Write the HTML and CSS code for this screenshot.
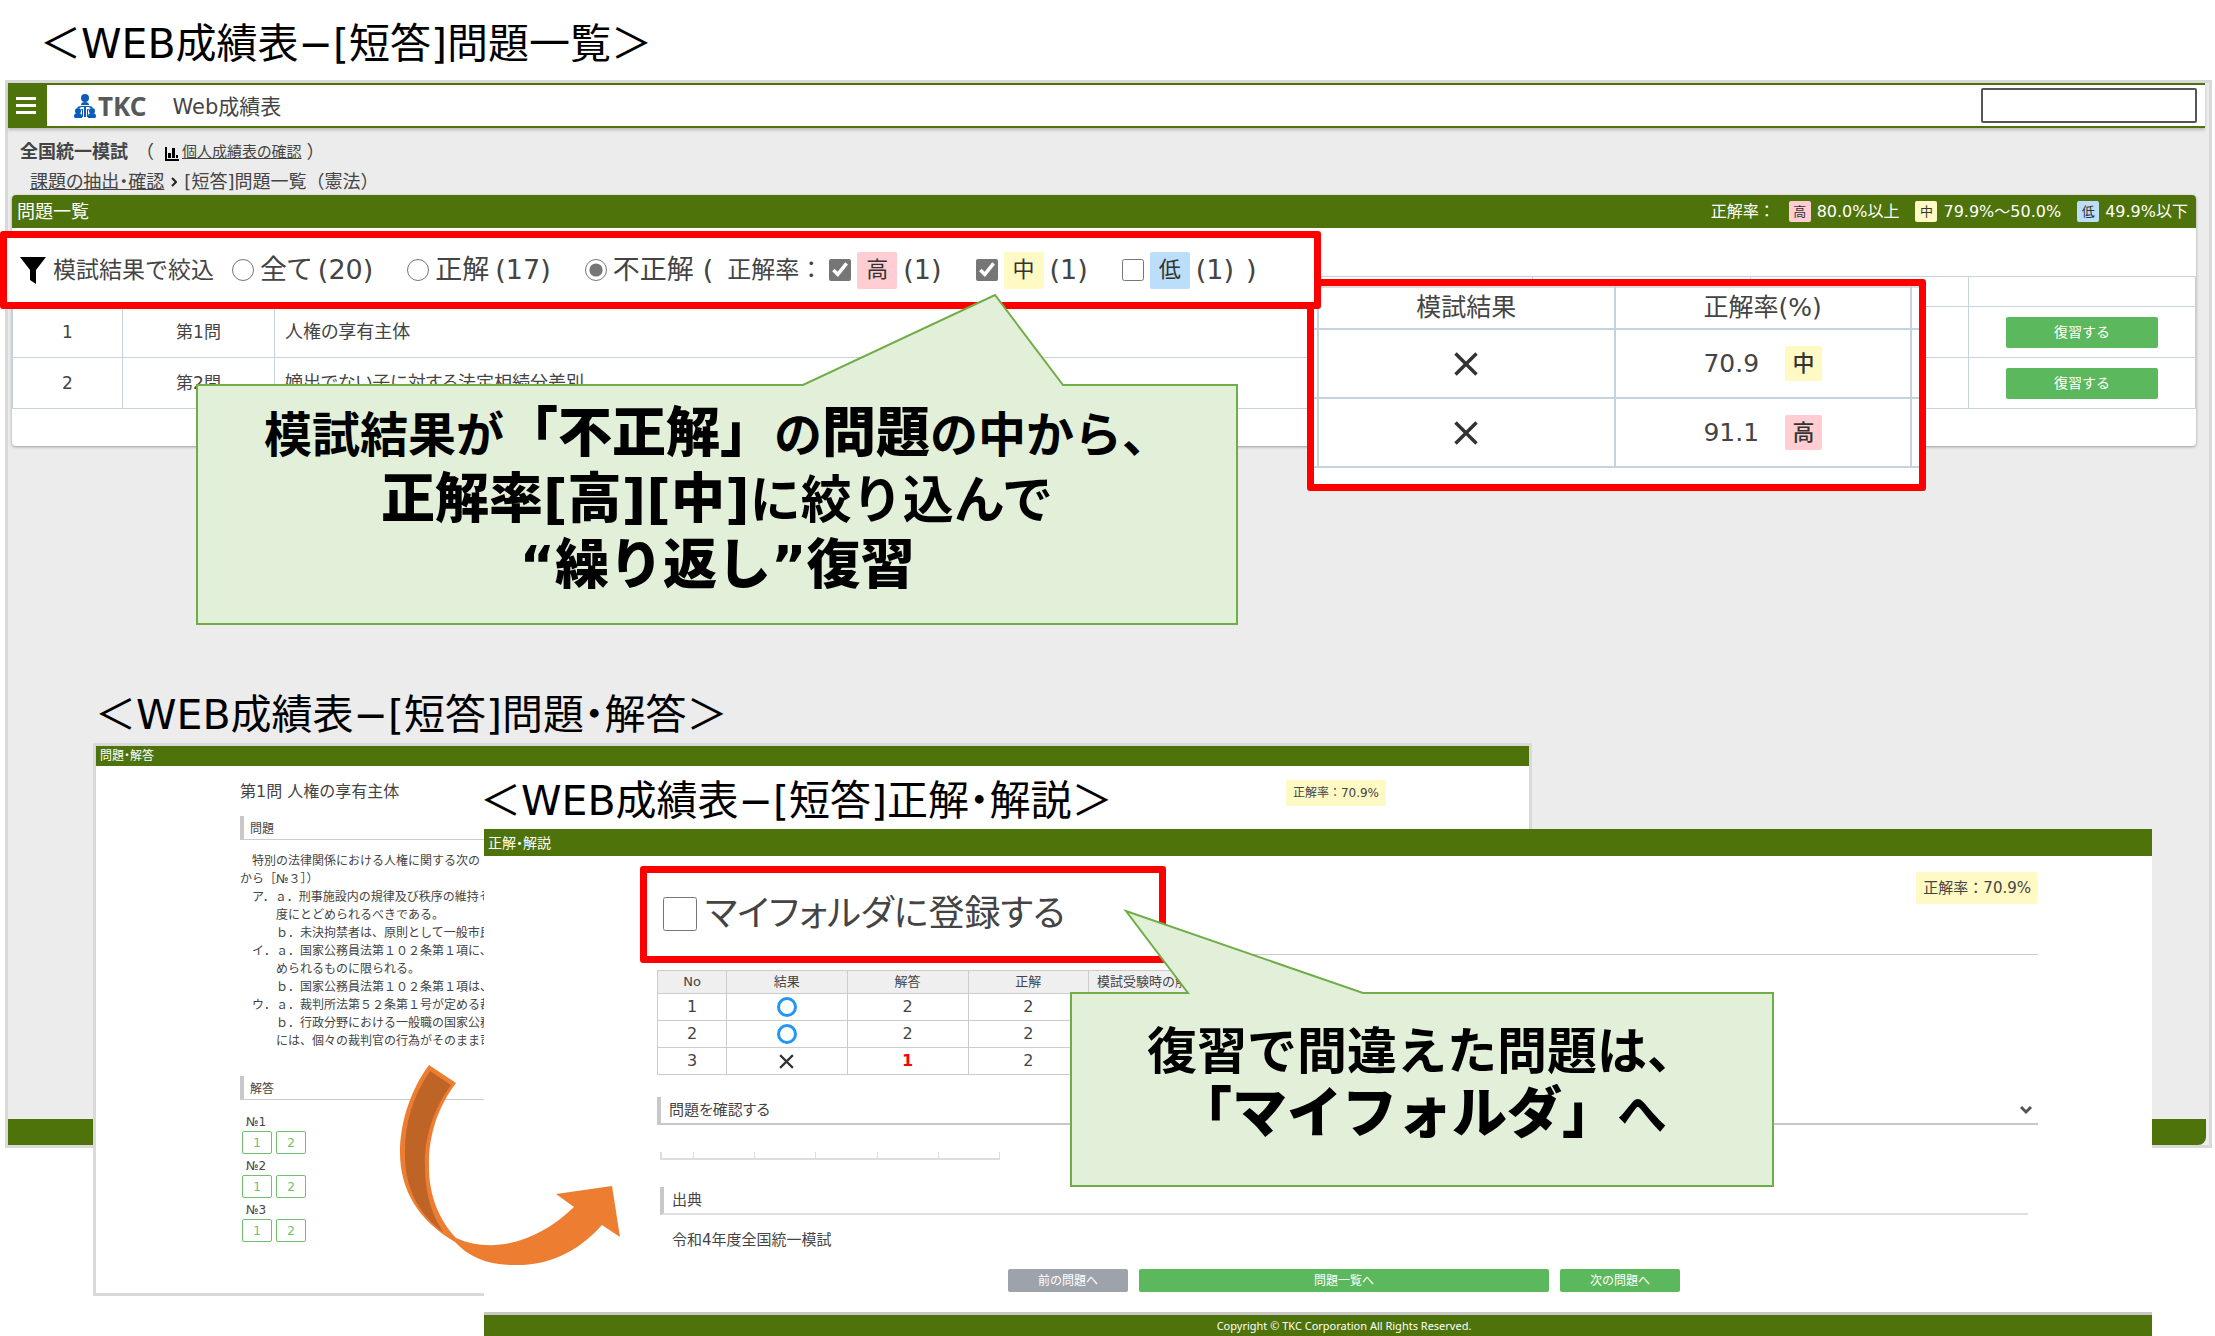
FILE: index.html
```html
<!DOCTYPE html>
<html lang="ja">
<head>
<meta charset="utf-8">
<meta name="viewport" content="width=device-width, initial-scale=1">
<title>WEB成績表</title>
<link rel="stylesheet" href="styles.css">
</head>
<body>
<main class="slide">
  <h1 class="caption caption-list">＜WEB成績表−[短答]問題一覧＞</h1>

  <section class="window window-list">
    <header class="topbar">
      <button class="menu" type="button" aria-label="メニュー"><span></span><span></span><span></span></button>
      <div class="logo">
        <svg width="22" height="24" viewBox="0 0 22 24" aria-hidden="true">
          <g fill="#0b5cb8">
            <circle cx="11" cy="4" r="4"/>
            <path d="M7 11Q7 8 11 8Q15 8 15 11Z"/>
            <path d="M3 14Q4 12 7 12H15Q18 12 19 14H16L15 13H12V23H10V13H7L6 14Z"/>
            <path d="M7 15H9V23H8V17Z M13 15H15L14 17V23H13Z"/>
            <circle cx="4" cy="17" r="3"/><circle cx="18" cy="17" r="3"/>
            <path d="M0 22Q0 19 4 19Q8 19 8 22V24H1Q0 24 0 22ZM14 22Q14 19 18 19Q22 19 22 22Q22 24 21 24H14Z"/>
          </g>
        </svg>
        <span class="logo-name">TKC</span>
      </div>
      <span class="app-name">Web成績表</span>
      <input class="user-box" type="text" aria-label="ユーザー">
    </header>
    <nav class="crumbs">
      <div class="crumb-exam">
        <strong>全国統一模試</strong><span>（</span>
        <svg width="14" height="14" viewBox="0 0 14 14" aria-hidden="true"><path d="M0 0H2V12H14V14H0Z M3 6H6V11H3Z M7 1H10V11H7Z M11 8H13V11H11Z" fill="#000"/></svg>
        <a class="crumb-report" href="#">個人成績表の確認</a><span>）</span>
      </div>
      <div class="crumb-path">
        <a href="#">課題の抽出・確認</a>
        <svg width="6" height="10" viewBox="0 0 6 10" aria-hidden="true"><path d="M1 1L5 5L1 9" fill="none" stroke="#222" stroke-width="2"/></svg>
        <span>[短答]問題一覧（憲法）</span>
      </div>
    </nav>
    <div class="panel">
      <div class="panel-head">
        <h2>問題一覧</h2>
        <div class="legend">
          <span class="legend-title">正解率：</span>
          <span class="tag high">高</span><span class="legend-text">80.0%以上</span>
          <span class="tag mid">中</span><span class="legend-text">79.9%～50.0%</span>
          <span class="tag low">低</span><span>49.9%以下</span>
        </div>
      </div>
      <table class="questions">
        <colgroup><col class="c-no"><col class="c-q"><col><col class="c-res"><col class="c-res"><col class="c-act"></colgroup>
        <thead><tr><th></th><th></th><th></th><th></th><th></th><th></th></tr></thead>
        <tbody>
          <tr><td>1</td><td>第1問</td><td class="name">人権の享有主体</td><td></td><td></td><td><button class="btn review" type="button">復習する</button></td></tr>
          <tr><td>2</td><td>第2問</td><td class="name">嫡出でない子に対する法定相続分差別</td><td></td><td></td><td><button class="btn review" type="button">復習する</button></td></tr>
        </tbody>
      </table>
    </div>
    <footer class="window-foot"></footer>
  </section>

  <h2 class="caption caption-question">＜WEB成績表−[短答]問題・解答＞</h2>

  <section class="window window-question">
    <h3 class="bar bar-small">問題・解答</h3>
    <div class="question-body">
      <div class="question-top"><h4>第1問 人権の享有主体</h4><span class="rate rate-small">正解率：70.9%</span></div>
      <h5 class="section small">問題</h5>
      <div class="passage">　特別の法律関係における人権に関する次の
から［№３］）
　ア．ａ．刑事施設内の規律及び秩序の維持そ
　　　度にとどめられるべきである。
　　　ｂ．未決拘禁者は、原則として一般市民
　イ．ａ．国家公務員法第１０２条第１項に、
　　　められるものに限られる。
　　　ｂ．国家公務員法第１０２条第１項は、
　ウ．ａ．裁判所法第５２条第１号が定める裁
　　　ｂ．行政分野における一般職の国家公務
　　　には、個々の裁判官の行為がそのまま司</div>
      <h5 class="section small">解答</h5>
      <div class="answers">
        <div><span>№1</span><p><button type="button">1</button><button type="button">2</button></p></div>
        <div><span>№2</span><p><button type="button">1</button><button type="button">2</button></p></div>
        <div><span>№3</span><p><button type="button">1</button><button type="button">2</button></p></div>
      </div>
    </div>
  </section>

  <section class="window-answer">
    <h3 class="bar">正解・解説</h3>
    <div class="answer-body">
      <div class="answer-top"><span class="rate">正解率：70.9%</span></div>
      <table class="results">
        <colgroup><col class="r-no"><col><col><col><col></colgroup>
        <thead><tr><th>No</th><th>結果</th><th>解答</th><th>正解</th><th>模試受験時の解答</th></tr></thead>
        <tbody>
          <tr><td>1</td><td><i class="ring"></i></td><td>2</td><td>2</td><td></td></tr>
          <tr><td>2</td><td><i class="ring"></i></td><td>2</td><td>2</td><td></td></tr>
          <tr><td>3</td><td><svg class="cross" width="17" height="17" viewBox="0 0 16 16"><path d="M2 2L14 14M14 2L2 14"/></svg></td><td class="wrong">1</td><td>2</td><td></td></tr>
        </tbody>
      </table>
      <h4 class="section fold">問題を確認する<svg class="chevron" width="14" height="10" viewBox="0 0 14 10" aria-hidden="true"><path d="M2 2L7 7L12 2" fill="none" stroke="#555" stroke-width="3"/></svg></h4>
      <div class="source">
        <div class="cells"><i></i><i></i><i></i><i></i><i></i><i></i></div>
        <h4 class="section pale">出典</h4>
        <p>令和4年度全国統一模試</p>
      </div>
    </div>
    <div class="pager">
      <button class="btn gray" type="button">前の問題へ</button>
      <button class="btn wide" type="button">問題一覧へ</button>
      <button class="btn" type="button">次の問題へ</button>
    </div>
    <footer class="copyright">Copyright © TKC Corporation All Rights Reserved.</footer>
  </section>

  <h2 class="caption caption-answer">＜WEB成績表−[短答]正解・解説＞</h2>

  <div class="frame frame-rates">
    <table class="rates">
      <colgroup><col class="edge"><col><col><col class="edge-right"></colgroup>
      <thead><tr><th></th><th>模試結果</th><th>正解率(%)</th><th></th></tr></thead>
      <tbody>
        <tr><td></td><td><svg class="cross" width="28" height="28" viewBox="0 0 16 16"><path d="M2 2L14 14M14 2L2 14"/></svg></td><td><div class="score">70.9<span class="tag big mid">中</span></div></td><td></td></tr>
        <tr><td></td><td><svg class="cross" width="28" height="28" viewBox="0 0 16 16"><path d="M2 2L14 14M14 2L2 14"/></svg></td><td><div class="score">91.1<span class="tag big high">高</span></div></td><td></td></tr>
      </tbody>
    </table>
  </div>

  <form class="frame frame-filter">
    <svg width="26" height="27" viewBox="0 0 26 27" aria-hidden="true"><path d="M0 0H26L16 13V27L10 23V13Z" fill="#000"/></svg>
    <span class="filter-title">模試結果で絞込</span>
    <label><input type="radio" name="result">全て<span>(20)</span></label>
    <label><input type="radio" name="result">正解<span>(17)</span></label>
    <label class="last-radio"><input type="radio" name="result" checked>不正解</label>
    <span class="paren">(</span><span class="rate-title">正解率：</span>
    <label><input type="checkbox" checked><span class="tag filter-tag high">高</span><span>(1)</span></label>
    <label><input type="checkbox" checked><span class="tag filter-tag mid">中</span><span>(1)</span></label>
    <label class="last-check"><input type="checkbox"><span class="tag filter-tag low">低</span><span>(1)</span></label>
    <span>)</span>
  </form>

  <div class="frame frame-folder">
    <label><input type="checkbox">マイフォルダに登録する</label>
  </div>

  <aside class="callout callout-filter">
    <svg width="1042" height="332" viewBox="0 0 1042 332" aria-hidden="true"><path d="M1 92H607L799 2L867 92H1041V331H1Z"/></svg>
    <p>模試結果が<b>「不正解」</b>の<b>問題</b>の中から、<br><b>正解率[高][中]</b><span class="medium">に絞り込んで</span><br><b>“繰り返し”復習</b></p>
  </aside>

  <aside class="callout callout-folder">
    <svg width="704" height="278" viewBox="0 0 704 278" aria-hidden="true"><path d="M1 84H118L56 2L293 84H703V277H1Z"/></svg>
    <p>復習で間違えた問題は、<br><b>「マイフォルダ」</b>へ</p>
  </aside>

  <svg class="arrow" width="224" height="204" viewBox="398 1063 224 204" aria-hidden="true">
    <path fill="#ed7d31" d="M429 1065L456 1083C436 1109 428 1140 429 1168C429 1195 439 1220 456 1238C492 1254 537 1243 574 1207L556 1194L612 1186L620 1237L602 1225C576 1254 546 1266 513 1265C486 1265 468 1256 455 1242C418 1220 400 1190 400 1152C400 1122 411 1089 429 1065Z"/>
    <path fill="#be6427" d="M430 1071L451 1085C432 1111 424 1140 425 1167C425 1192 431 1214 443 1232C418 1214 404 1186 405 1152C405 1122 413 1096 430 1071Z"/>
  </svg>
</main>
</body>
</html>
```
FILE: styles.css
```css
* { box-sizing: border-box; }

body {
  margin: 0;
  background: #fff;
  color: #444;
  font: 17px/24px "DejaVu Sans", "Noto Sans CJK JP", sans-serif;
}

h1, h2, h3, h4, h5, p { margin: 0; font-weight: 400; }
button, input { font: inherit; }
a { color: inherit; }

/* Every window of the slide shares one grid cell and is offset by its margin. */
.slide {
  position: relative;
  display: grid;
  grid-template: auto / minmax(0, 1fr);
  align-items: start;
  overflow: hidden;
}
.slide > h1, .slide > h2, .slide > section { grid-area: 1 / 1; }

.caption { color: #000; font-size: 41px; line-height: 56px; white-space: nowrap; font-feature-settings: "palt"; }
.caption-list { margin: 16px 0 0 40px; }
.caption-question { margin: 687px 0 0 95px; }
.caption-answer { margin: 773px 0 0 480px; }

.window { border: 3px solid #d9d9d9; background: #fff; }

/* Question list window */
.window-list {
  margin: 80px 3px 0 5px;
  background: #ececec;
  display: flex;
  flex-direction: column;
  min-height: 1068px;
}
.topbar {
  display: flex;
  align-items: center;
  height: 45px;
  margin-right: 4px;
  padding-right: 8px;
  background: #fff;
  border: solid #4e730a;
  border-width: 2px 0;
  box-shadow: 0 2px 3px #bbb;
}
.menu {
  align-self: stretch;
  display: flex;
  flex-direction: column;
  align-items: center;
  justify-content: center;
  gap: 4px;
  width: 39px;
  padding: 0 4px 0 0;
  border: 0;
  background: #4e730a;
}
.menu span { width: 20px; height: 3px; background: #fff; }
.logo { display: flex; align-items: center; gap: 2px; margin-left: 27px; }
.logo-name { color: #58595b; font: 700 26px/24px "Noto Sans", sans-serif; }
.app-name { margin-left: 26px; padding-top: 2px; font-size: 21px; }
.user-box { width: 216px; height: 35px; margin-left: auto; border: 2px solid #555; border-radius: 2px; background: #fff; }

.crumbs { padding: 9px 12px 0; height: 67px; font-size: 18px; line-height: 30px; }
.crumb-exam, .crumb-path { display: flex; align-items: center; }
.crumb-exam strong { margin-right: 8px; font-weight: 700; }
.crumb-exam svg { margin: 3px 3px 0 11px; }
.crumb-report { margin-right: 5px; font-size: 15px; font-feature-settings: "palt"; }
.crumb-path { padding-left: 10px; gap: 7px; }
.crumb-path a { font-feature-settings: "palt"; }

.panel {
  margin: 0 13px 0 4px;
  padding-bottom: 37px;
  background: #fff;
  border-radius: 4px;
  box-shadow: 0 1px 3px #999;
}
.panel-head {
  display: flex;
  align-items: center;
  justify-content: space-between;
  height: 33px;
  padding: 0 8px 0 5px;
  border-radius: 4px 4px 0 0;
  background: #4e730a;
  color: #fff;
}
.panel-head h2 { font-size: 18px; }
.legend { display: flex; align-items: center; gap: 6px; font-size: 16px; }
.legend-title { margin-right: 8px; }
.legend-text { margin-right: 10px; }

.tag {
  display: inline-flex;
  align-items: center;
  justify-content: center;
  width: 22px;
  height: 21px;
  border-radius: 2px;
  color: #333;
  font-size: 13px;
}
.high { background: #ffcdd2; }
.mid { background: #fff9c4; }
.low { background: #bbdefb; }

.questions { width: 100%; margin-top: 48px; border-collapse: collapse; table-layout: fixed; }
.questions th, .questions td { border: 1px solid #c5d3df; padding: 0; text-align: center; }
.questions th { height: 30px; }
.questions td { height: 51px; }
.questions .name { padding-left: 10px; text-align: left; font-size: 18px; font-feature-settings: "palt"; }
.c-no { width: 110px; }
.c-q { width: 152px; }
.c-res { width: 218px; }
.c-act { width: 227px; }

.btn {
  width: 120px;
  height: 23px;
  padding: 0;
  border: 0;
  border-radius: 2px;
  background: #5cb85c;
  color: #fff;
  font-size: 12px;
  line-height: 22px;
}
.review { display: block; width: 152px; height: 31px; margin: 0 auto; font-size: 14px; }
.gray { background: #9ea3ab; }
.wide { width: 410px; }

.window-foot { height: 26px; margin: auto 3px 0 0; background: #4e730a; border-radius: 0 0 8px 0; }

/* Question window */
.window-question { margin: 743px 683px 0 93px; padding-bottom: 51px; }
.bar { height: 27px; padding-left: 4px; background: #4e730a; color: #fff; font-size: 14px; line-height: 28px; font-feature-settings: "palt"; }
.bar-small { height: 20px; font-size: 12px; line-height: 20px; }
.question-body { padding: 14px 143px 0 144px; font-size: 12px; }
.question-top { display: flex; justify-content: space-between; align-items: flex-start; }
.question-top h4 { padding-top: 4px; font-size: 16px; line-height: 16px; padding-bottom: 16px; }
.rate { padding: 0 7px; border-radius: 2px; background: #fff9c4; font-size: 15px; line-height: 32px; }
.rate-small { padding: 0 7px; font-size: 12px; line-height: 26px; }

.section {
  display: flex;
  align-items: center;
  height: 28px;
  padding: 0 5px 0 8px;
  border-left: 4px solid #c8c8c8;
  border-bottom: 2px solid #c8c8c8;
  font-size: 15px;
}
.small { height: 24px; padding-left: 6px; padding-top: 2px; border-bottom: 1px solid #ccc; font-size: 12px; }
.pale { border-bottom-color: #e0e0e0; }
.fold { font-feature-settings: "palt"; }
.passage { padding: 12px 0 26px; line-height: 18px; white-space: pre; }
.answers { display: grid; gap: 3px; padding: 13px 0 0 2px; }
.answers span { display: block; padding-left: 4px; line-height: 18px; }
.answers p { display: flex; gap: 4px; }
.answers button { width: 30px; height: 23px; padding: 0; border: 1px solid #6fc06f; border-radius: 2px; background: #fff; color: #6fc06f; line-height: 20px; }

/* Answer window */
.window-answer { margin: 829px 63px 0 484px; background: #fff; font-size: 15px; }
.answer-body { padding: 16px 114px 0 173px; }
.answer-top { display: flex; justify-content: flex-end; align-items: flex-start; height: 83px; border-bottom: 1px solid #ccc; }
.results { width: 553px; margin: 15px 0 22px; border-collapse: collapse; table-layout: fixed; font-size: 16px; }
.results th, .results td { height: 27px; padding: 0; border: 1px solid #ccc; line-height: 22px; text-align: center; }
.results th { height: 23px; background: #efefef; font-size: 13px; font-weight: 400; }
.r-no { width: 69px; }
.results .wrong { color: #f00; font-weight: 700; }
.ring { display: block; width: 20px; height: 20px; margin: 0 auto; border: 3px solid #2196f3; border-radius: 50%; }
.cross { display: block; margin: 0 auto; fill: none; stroke: #333; stroke-width: 2; }
.chevron { margin-left: auto; }
.source { margin: 27px 10px 0 3px; }
.cells { display: flex; width: 340px; height: 8px; margin-bottom: 27px; border: solid #ddd; border-width: 0 1px 2px; }
.cells i { flex: 62; border-left: 1px solid #ddd; }
.cells i:first-child { flex: 32; }
.source p { padding: 13px 0 17px 12px; }
.pager { display: flex; justify-content: center; gap: 11px; padding: 0 0 20px 57px; margin-right: 5px; }
.copyright { height: 24px; border-top: 3px solid #c8c8c8; background: #4e730a; color: #fff; font: 11px/22px "Noto Sans", sans-serif; padding-left: 52px; text-align: center; }

/* Highlighted close-ups */
.frame { position: absolute; border: 7px solid #f00; border-radius: 3px; background: #fff; }
.frame-filter {
  top: 231px;
  left: 0;
  display: flex;
  align-items: center;
  width: 1321px;
  height: 78px;
  padding-left: 13px;
  font-size: 27px;
  line-height: 36px;
  white-space: nowrap;
  font-feature-settings: "palt";
}
.frame-filter label { display: flex; align-items: center; gap: 6px; margin-right: 34px; }
.frame-filter input { width: 22px; height: 22px; margin: 0; accent-color: #767676; }
.filter-title { margin: 0 18px 0 7px; font-size: 23px; font-feature-settings: normal; }
.frame-filter .last-radio { margin-right: 9px; }
.paren { margin-right: 14px; }
.rate-title { font-size: 24px; margin-right: 6px; font-feature-settings: normal; }
.frame-filter .last-check { margin-right: 12px; }
.filter-tag { width: 40px; height: 37px; font-size: 22px; }

.frame-rates { top: 279px; left: 1307px; width: 619px; height: 212px; }
.rates { width: 100%; border-collapse: collapse; table-layout: fixed; font-size: 25px; }
.rates th { height: 42px; padding: 0; font-weight: 400; border: 2px solid #c5d3df; border-top-color: #ddd; }
.rates td { height: 69px; padding: 0; border: 2px solid #c5d3df; }
.rates th:first-child, .rates td:first-child { border-left: 0; }
.rates th:last-child, .rates td:last-child { border-right: 0; }
.edge { width: 4px; }
.edge-right { width: 8px; }
.score { display: flex; justify-content: center; align-items: center; gap: 26px; }
.big { width: 37px; height: 35px; font-size: 22px; font-weight: 500; }

.frame-folder { top: 866px; left: 640px; width: 526px; height: 97px; padding: 0 16px; }
.frame-folder label { display: flex; align-items: center; gap: 8px; height: 82px; font-size: 36px; white-space: nowrap; font-feature-settings: "palt"; }
.frame-folder input { width: 34px; height: 34px; margin: 0; }

.callout { position: absolute; color: #000; text-align: center; white-space: nowrap; }
.callout svg { display: block; }
.callout path { fill: #e2efd9; stroke: #70ad47; stroke-width: 2; }
.callout p { position: absolute; left: 0; right: 0; font-weight: 700; }
.callout b { line-height: 54px; }
.callout-filter { top: 293px; left: 196px; }
.callout-filter p { top: 109px; font-size: 48px; line-height: 66px; }
.callout-filter b { font-size: 54px; }
.callout-filter .medium { font-size: 51px; }
.callout-folder { top: 909px; left: 1070px; }
.callout-folder p { top: 112px; font-size: 50px; line-height: 63px; }
.callout-folder b { font-size: 55px; }

.arrow { position: absolute; top: 1063px; left: 398px; }
```
